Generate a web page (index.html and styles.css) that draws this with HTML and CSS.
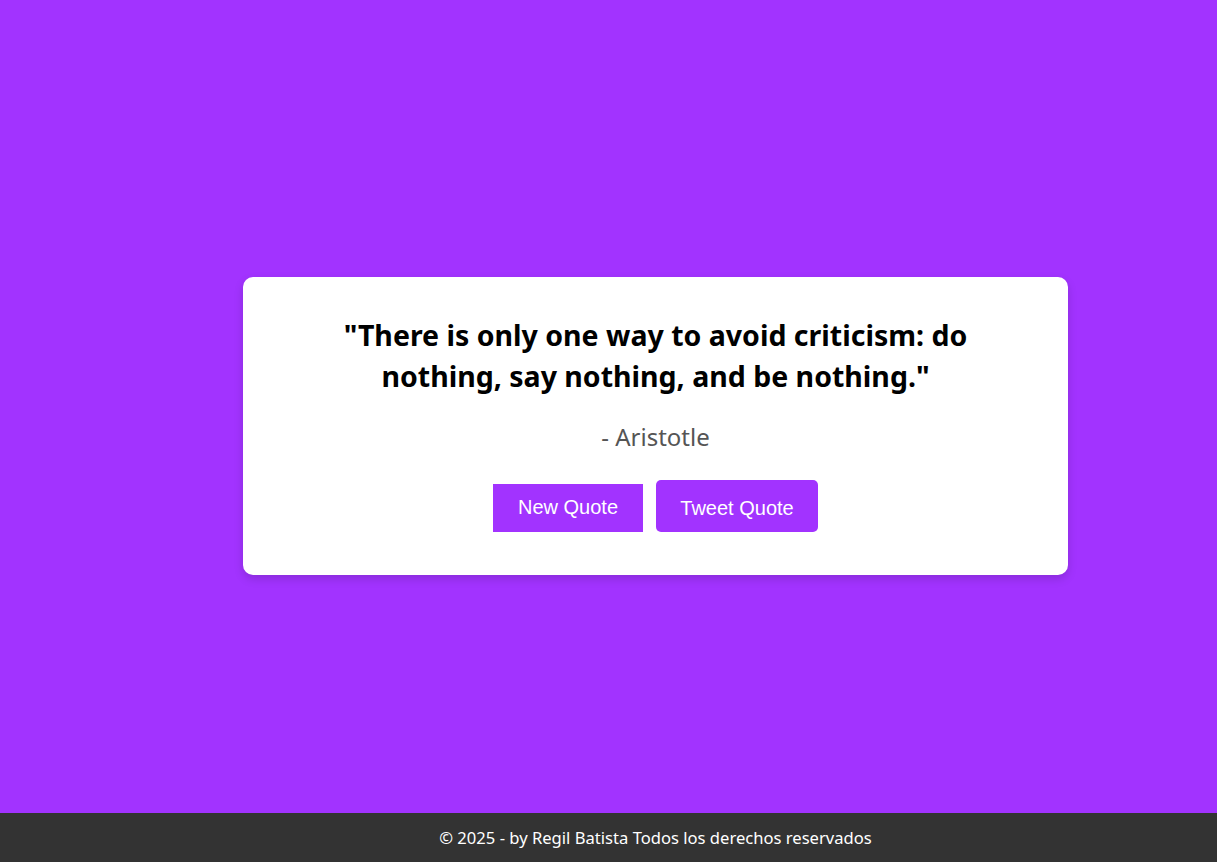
FILE: index.html
```html
<!DOCTYPE html>
<html lang="es">
<head>
<meta charset="utf-8">
<title>Quote Generator</title>
<link rel="stylesheet" href="styles.css">
</head>
<body>
<div class="page">
  <main class="main">
    <div class="card">
      <h2 class="quote">"There is only one way to avoid criticism: do nothing, say nothing, and be nothing."</h2>
      <p class="author">- Aristotle</p>
      <div class="actions">
        <button class="btn btn-new">New Quote</button>
        <a class="btn btn-tweet" href="#">Tweet Quote</a>
      </div>
    </div>
  </main>
  <footer class="footer">© 2025 - by Regil Batista Todos los derechos reservados</footer>
</div>
</body>
</html>
```
FILE: styles.css
```css
html, body {
  margin: 0;
  padding: 0;
  overflow: hidden;
}
body {
  background: #a233ff;
  font-family: "Noto Sans", "Open Sans", sans-serif;
}
.page {
  height: 862px;
  display: flex;
  flex-direction: column;
}
.main {
  flex: 1;
  display: flex;
  align-items: flex-start;
  justify-content: center;
  padding: 277px 0 0 94px;
  box-sizing: border-box;
}
.card {
  width: 825px;
  box-sizing: border-box;
  background: #fff;
  border-radius: 10px;
  padding: 38px 40px 43px;
  box-shadow: 0 4px 10px rgba(0, 0, 0, 0.15);
  display: flex;
  flex-direction: column;
  align-items: center;
  text-align: center;
}
.quote {
  margin: 0;
  max-width: 660px;
  font-size: 28.5px;
  line-height: 41px;
  font-weight: 700;
  color: #000;
}
.author {
  margin: 24px 0 0;
  font-size: 24px;
  line-height: 32px;
  color: #555;
}
.actions {
  margin-top: 27px;
  display: flex;
  align-items: flex-end;
  gap: 13px;
}
.btn {
  font-family: "Liberation Sans", Arial, sans-serif;
  font-size: 20px;
  color: #fff;
  background: #a233ff;
  border: none;
  text-decoration: none;
  box-sizing: border-box;
  display: flex;
  align-items: center;
  justify-content: center;
}
.btn-new {
  width: 150px;
  height: 48px;
  border-radius: 0;
  padding: 0 0 2px;
}
.btn-tweet {
  width: 162px;
  height: 52px;
  border-radius: 5px;
  padding-top: 4px;
}
.footer {
  height: 49px;
  background: #333;
  color: #fff;
  font-size: 16.6px;
  display: flex;
  align-items: center;
  justify-content: center;
  padding-left: 94px;
}
```
